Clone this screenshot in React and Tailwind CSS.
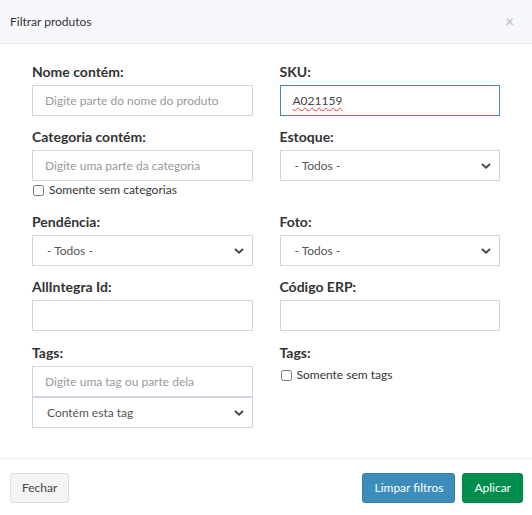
import React from "react";

const font = { fontFamily: "Lato, 'Open Sans', sans-serif" };

const Label = ({ children }) => (
  <label className="block text-[14px] font-bold text-[#333] leading-[18px] mb-[4px]">
    {children}
  </label>
);

const Input = ({ placeholder }) => (
  <input
    className="block w-full h-[31px] px-3 text-[12px] text-[#555] placeholder:text-[#999] bg-white outline-none border border-[#d2d6de]"
    placeholder={placeholder}
  />
);

// SKU field, shown focused with the browser's spell-check squiggle
const FocusedInput = ({ value }) => (
  <div className="w-full h-[31px] px-3 flex items-center text-[12px] text-[#444] bg-white border border-[#3c8dbc]">
    <span className="underline decoration-wavy decoration-[#e33] decoration-1 underline-offset-2">
      {value}
    </span>
  </div>
);

const Chevron = () => (
  <svg
    className="absolute right-[9px] top-1/2 -translate-y-1/2 pointer-events-none"
    width="10"
    height="7"
    viewBox="0 0 10 7"
  >
    <path d="M1 1.5 L5 5.2 L9 1.5" fill="none" stroke="#444" strokeWidth="1.8" />
  </svg>
);

const Select = ({ value, className = "" }) => (
  <div className={"relative " + className}>
    <select
      className="block w-full h-[31px] pl-[14px] pr-7 text-[12px] text-[#555] bg-white border border-[#d2d6de] appearance-none outline-none"
      defaultValue={value}
    >
      <option>{value}</option>
    </select>
    <Chevron />
  </div>
);

const Check = ({ children }) => (
  <label className="flex items-center gap-[5px] text-[12px] text-[#333] leading-[18px]">
    <input type="checkbox" className="w-[11px] h-[11px] m-0 ml-[1px]" />
    {children}
  </label>
);

export default function App() {
  return (
    <div style={font} className="w-[532px] h-[515px] bg-white flex flex-col">
      <div className="h-[44px] shrink-0 bg-[#f7f8fb] border-b border-[#ebedf0] flex items-center justify-between pl-[10px] pr-[18px]">
        <span className="text-[12px] text-[#333]">Filtrar produtos</span>
        <span className="text-[15px] text-[#c8c8c8] font-bold leading-none">×</span>
      </div>

      <div className="flex-1 px-[32px] pt-[19px] grid grid-cols-2 gap-x-[27px] content-start">
        <div>
          <Label>Nome contém:</Label>
          <Input placeholder="Digite parte do nome do produto" />
        </div>
        <div>
          <Label>SKU:</Label>
          <FocusedInput value="A021159" />
        </div>

        <div className="mt-[12px]">
          <Label>Categoria contém:</Label>
          <Input placeholder="Digite uma parte da categoria" />
          <Check>Somente sem categorias</Check>
        </div>
        <div className="mt-[12px]">
          <Label>Estoque:</Label>
          <Select value="- Todos -" />
        </div>

        <div className="mt-[14px]">
          <Label>Pendência:</Label>
          <Select value="- Todos -" />
        </div>
        <div className="mt-[14px]">
          <Label>Foto:</Label>
          <Select value="- Todos -" />
        </div>

        <div className="mt-[12px]">
          <Label>AllIntegra Id:</Label>
          <Input />
        </div>
        <div className="mt-[12px]">
          <Label>Código ERP:</Label>
          <Input />
        </div>

        <div className="mt-[13px]">
          <Label>Tags:</Label>
          <Input placeholder="Digite uma tag ou parte dela" />
          <Select value="Contém esta tag" />
        </div>
        <div className="mt-[13px]">
          <Label>Tags:</Label>
          <Check>Somente sem tags</Check>
        </div>
      </div>

      <div className="h-[57px] shrink-0 border-t border-[#ebedf0] flex items-start pt-[14px] px-[10px]">
        <button className="h-[30px] px-[11px] text-[12px] text-[#444] bg-[#f4f4f4] border border-[#ddd] rounded-[3px]">
          Fechar
        </button>
        <div className="ml-auto flex gap-[7px] mr-[-1px]">
          <button className="h-[30px] px-[11px] text-[12px] text-white bg-[#3c8dbc] border border-[#367fa9] rounded-[3px]">
            Limpar filtros
          </button>
          <button className="h-[30px] px-[11px] text-[12px] text-white bg-[#008d4c] border border-[#008d4c] rounded-[3px]">
            Aplicar
          </button>
        </div>
      </div>
    </div>
  );
}
